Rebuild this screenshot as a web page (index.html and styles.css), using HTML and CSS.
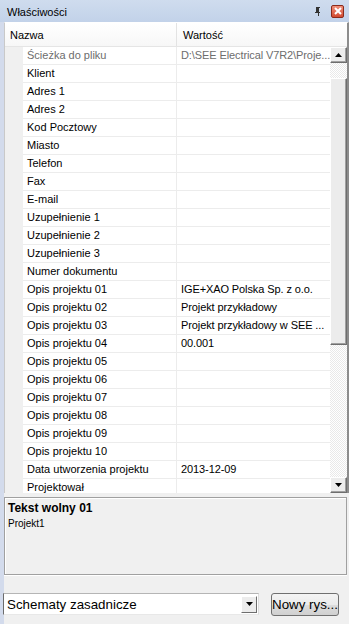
FILE: index.html
```html
<!DOCTYPE html>
<html>
<head>
<meta charset="utf-8">
<link rel="stylesheet" href="styles.css">
</head>
<body>
<div class="window">
  <div class="titlebar">
    <span class="title">Właściwości</span>
    <span class="tb-icons">
      <svg class="pin" width="7" height="9" viewBox="0 0 7 9"><path d="M2 0h3v1H4v4h1v1H4v3H3V6H0V5h2V1H1V0z" fill="#333"/><rect x="1" y="1" width="1" height="4" fill="#333"/></svg>
      <span class="close"><svg width="8" height="8" viewBox="0 0 8 8"><path d="M1 1L7 7M7 1L1 7" stroke="#fff" stroke-width="2"/></svg></span>
    </span>
  </div>
  <div class="body">
    <div class="stripe"></div>
    <div class="panel">
      <div class="grid">
        <div class="gridmain">
          <div class="header">
            <div class="hcell hname">Nazwa</div>
            <div class="hcell hval">Wartość</div>
          </div>
          <div class="rowsarea">
            <div class="rows">
              <div class="row ro"><div class="gut"></div><div class="cn">Ścieżka do pliku</div><div class="cv">D:\SEE Electrical V7R2\Proje...</div></div>
              <div class="row"><div class="gut"></div><div class="cn">Klient</div><div class="cv"></div></div>
              <div class="row"><div class="gut"></div><div class="cn">Adres 1</div><div class="cv"></div></div>
              <div class="row"><div class="gut"></div><div class="cn">Adres 2</div><div class="cv"></div></div>
              <div class="row"><div class="gut"></div><div class="cn">Kod Pocztowy</div><div class="cv"></div></div>
              <div class="row"><div class="gut"></div><div class="cn">Miasto</div><div class="cv"></div></div>
              <div class="row"><div class="gut"></div><div class="cn">Telefon</div><div class="cv"></div></div>
              <div class="row"><div class="gut"></div><div class="cn">Fax</div><div class="cv"></div></div>
              <div class="row"><div class="gut"></div><div class="cn">E-mail</div><div class="cv"></div></div>
              <div class="row"><div class="gut"></div><div class="cn">Uzupełnienie 1</div><div class="cv"></div></div>
              <div class="row"><div class="gut"></div><div class="cn">Uzupełnienie 2</div><div class="cv"></div></div>
              <div class="row"><div class="gut"></div><div class="cn">Uzupełnienie 3</div><div class="cv"></div></div>
              <div class="row"><div class="gut"></div><div class="cn">Numer dokumentu</div><div class="cv"></div></div>
              <div class="row"><div class="gut"></div><div class="cn">Opis projektu 01</div><div class="cv">IGE+XAO Polska Sp. z o.o.</div></div>
              <div class="row"><div class="gut"></div><div class="cn">Opis projektu 02</div><div class="cv">Projekt przykładowy</div></div>
              <div class="row"><div class="gut"></div><div class="cn">Opis projektu 03</div><div class="cv">Projekt przykładowy w SEE ...</div></div>
              <div class="row"><div class="gut"></div><div class="cn">Opis projektu 04</div><div class="cv">00.001</div></div>
              <div class="row"><div class="gut"></div><div class="cn">Opis projektu 05</div><div class="cv"></div></div>
              <div class="row"><div class="gut"></div><div class="cn">Opis projektu 06</div><div class="cv"></div></div>
              <div class="row"><div class="gut"></div><div class="cn">Opis projektu 07</div><div class="cv"></div></div>
              <div class="row"><div class="gut"></div><div class="cn">Opis projektu 08</div><div class="cv"></div></div>
              <div class="row"><div class="gut"></div><div class="cn">Opis projektu 09</div><div class="cv"></div></div>
              <div class="row"><div class="gut"></div><div class="cn">Opis projektu 10</div><div class="cv"></div></div>
              <div class="row"><div class="gut"></div><div class="cn">Data utworzenia projektu</div><div class="cv">2013-12-09</div></div>
              <div class="row"><div class="gut"></div><div class="cn">Projektował</div><div class="cv"></div></div>
            </div>
            <div class="vscroll">
              <div class="sbtn"><svg width="7" height="4" viewBox="0 0 7 4"><path d="M3.5 0L7 4H0z" fill="#000"/></svg></div>
              <div class="track t1"></div>
              <div class="thumb"></div>
              <div class="track t2"></div>
              <div class="sbtn"><svg width="7" height="4" viewBox="0 0 7 4"><path d="M0 0H7L3.5 4z" fill="#000"/></svg></div>
            </div>
          </div>
        </div>
      </div>
      <div class="desc">
        <div class="desc-title">Tekst wolny 01</div>
        <div class="desc-text">Projekt1</div>
      </div>
      <div class="bottom">
        <div class="combo">
          <span class="combo-text">Schematy zasadnicze</span>
          <span class="combo-btn"><svg width="7" height="4" viewBox="0 0 7 4"><path d="M0 0H7L3.5 4z" fill="#000"/></svg></span>
        </div>
        <div class="btn">Nowy rys...</div>
      </div>
    </div>
  </div>
</div>
</body>
</html>
```
FILE: styles.css
```css
html, body {
  margin: 0;
  padding: 0;
}
body {
  width: 349px;
  height: 624px;
  overflow: hidden;
  background: #f0f0f0;
  font-family: "Liberation Sans", Arial, sans-serif;
  font-size: 11px;
  color: #000;
}
.window {
  width: 349px;
  height: 624px;
  display: flex;
  flex-direction: column;
}
.titlebar {
  height: 22px;
  flex: none;
  display: flex;
  align-items: center;
  justify-content: space-between;
  background: linear-gradient(#cfdcee, #c2d2e9);
  padding: 0 5px 0 7px;
  box-sizing: border-box;
}
.title {
  font-size: 11px;
  padding-top: 2px;
}
.tb-icons {
  display: flex;
  align-items: center;
  gap: 9px;
}
.pin {
  display: block;
}
.close {
  width: 11px;
  height: 11px;
  border: 1px solid #8b2a1a;
  border-radius: 2px;
  background: linear-gradient(#f08f79, #d24a30);
  display: flex;
  align-items: center;
  justify-content: center;
}
.close svg { display: block; }
.body {
  flex: 1;
  display: flex;
  min-height: 0;
}
.stripe {
  width: 4px;
  flex: none;
  background: #d3dbec;
}
.panel {
  flex: 1;
  display: flex;
  flex-direction: column;
  min-width: 0;
}
.grid {
  height: 471px;
  flex: none;
  display: flex;
  border-right: 2px solid #8c8c8c;
  border-left: 1px solid #c9c9c9;
  border-top: 1px solid #ffffff;
  box-sizing: border-box;
}
.gridmain {
  flex: 1;
  display: flex;
  flex-direction: column;
  min-width: 0;
}
.header {
  height: 24px;
  flex: none;
  display: flex;
  background: linear-gradient(#ffffff, #f7f7f7);
  border-bottom: 1px solid #e5e5e5;
  box-sizing: border-box;
}
.hcell {
  display: flex;
  align-items: center;
  padding-top: 1px;
}
.hname {
  width: 172px;
  padding-left: 5px;
  box-sizing: border-box;
  border-right: 1px solid #e3e3e3;
}
.hval {
  flex: 1;
  padding-left: 6px;
}
.rowsarea {
  flex: 1;
  display: flex;
  min-height: 0;
}
.rows {
  flex: 1;
  overflow: hidden;
  background: #fff;
  min-width: 0;
}
.row {
  height: 18px;
  display: flex;
}
.gut {
  width: 18px;
  flex: none;
  background: #f0f0f0;
}
.cn {
  width: 154px;
  flex: none;
  box-sizing: border-box;
  padding-left: 4px;
  border-right: 1px solid #ececec;
  border-bottom: 1px solid #ececec;
  line-height: 17px;
  white-space: nowrap;
  overflow: hidden;
}
.cv {
  flex: 1;
  min-width: 0;
  padding-left: 4px;
  border-bottom: 1px solid #ececec;
  line-height: 17px;
  white-space: nowrap;
  letter-spacing: -0.1px;
}
.ro .cn, .ro .cv {
  color: #6d6d6d;
}
.vscroll {
  width: 17px;
  flex: none;
  display: flex;
  flex-direction: column;
}
.sbtn, .thumb {
  box-sizing: border-box;
  background: #ececec;
  border-top: 1px solid #ffffff;
  border-left: 1px solid #ffffff;
  border-right: 1px solid #6e6e6e;
  border-bottom: 1px solid #6e6e6e;
  box-shadow: inset -1px -1px 0 #a0a0a0;
}
.sbtn {
  height: 16px;
  flex: none;
  display: flex;
  align-items: center;
  justify-content: center;
  padding: 0 1px 1px 0;
}
.sbtn svg { display: block; }
.track {
  background-color: #ffffff;
  background-image: repeating-conic-gradient(#e9e9e9 0 25%, #ffffff 0 50%);
  background-size: 2px 2px;
}
.t1 { height: 15px; flex: none; }
.thumb { height: 267px; flex: none; }
.t2 { flex: 1; }
.desc {
  margin-top: 4px;
  height: 78px;
  flex: none;
  box-sizing: border-box;
  border: 1px solid #a0a0a0;
  box-shadow: inset 1px 1px 0 #ffffff, 0 1px 0 #ffffff;
  margin-right: 2px;
  padding: 3px 3px;
  background: #f0f0f0;
}
.desc-title {
  font-weight: bold;
  font-size: 12px;
  line-height: 15px;
}
.desc-text {
  font-size: 10px;
  line-height: 14px;
  margin-top: 1px;
}
.bottom {
  margin-top: 18px;
  display: flex;
  align-items: flex-start;
  gap: 12px;
}
.combo {
  width: 256px;
  height: 22px;
  box-sizing: border-box;
  background: #fff;
  border-top: 1px solid #b5b5b5;
  border-left: 1px solid #6c6c6c;
  border-right: 1px solid #dcdcdc;
  border-bottom: 1px solid #e8e8e8;
  display: flex;
  align-items: center;
  justify-content: space-between;
  padding: 0 1px 0 3px;
  margin-left: -1px;
}
.combo-text {
  font-size: 13.33px;
}
.combo-btn {
  width: 16px;
  height: 17px;
  box-sizing: border-box;
  background: #ececec;
  border-top: 1px solid #ffffff;
  border-left: 1px solid #ffffff;
  border-right: 1px solid #6e6e6e;
  border-bottom: 1px solid #6e6e6e;
  display: flex;
  align-items: center;
  justify-content: center;
}
.combo-btn svg { display: block; }
.btn {
  width: 68px;
  height: 23px;
  box-sizing: border-box;
  border: 1px solid #707070;
  border-radius: 3px;
  background: linear-gradient(#f4f4f4 0%, #ebebeb 50%, #dddddd 51%, #d0d0d0 100%);
  font-size: 13.33px;
  display: flex;
  align-items: center;
  justify-content: center;
  padding-bottom: 1px;
}
```
